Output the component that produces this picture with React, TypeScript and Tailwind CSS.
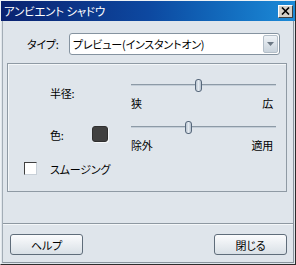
import React from "react";

const font = "font-['Noto_Sans_CJK_JP','Noto_Sans',sans-serif] [font-feature-settings:'palt'] tracking-[-0.2px]";

function Slider({ pos, low, high }: { pos: number; low: string; high: string }) {
  return (
    <div className="w-[145px]">
      <div className="relative h-[13px]">
        <div className="absolute left-0 right-0 top-[5px] h-[2px] border-t border-[#8d9aa6] bg-[#c4ced8]" />
        <div
          className="absolute top-0 h-[13px] w-[7px] rounded-[3px] border border-[#56677a] bg-gradient-to-r from-[#b9c4cf] via-[#e4eaf0] to-[#b4c0cc]"
          style={{ left: pos }}
        />
      </div>
      <div className="mt-[5px] flex justify-between pr-[3px] leading-[12px]">
        <span>{low}</span>
        <span>{high}</span>
      </div>
    </div>
  );
}

function Button({ label }: { label: string }) {
  return (
    <button className="flex h-[21px] w-[73px] items-center justify-center rounded-[3px] border border-[#5f6d7a] bg-gradient-to-b from-[#fbfcfd] to-[#d9e0e6] text-[11px] leading-[12px] text-black">
      {label}
    </button>
  );
}

export default function App() {
  return (
    <div className={`${font} h-[265px] w-[296px] border border-t-[#eef2f5] border-l-[#eef2f5] border-r-[#2c2c2c] border-b-[#2c2c2c] bg-[#dfe5eb] text-[11px] text-black`}>
      <div className="flex h-[20px] items-center justify-between bg-gradient-to-r from-[#0a2270] via-[#0d48a0] to-[#1c8bd8] pl-[3px] pr-[2px]">
        <span className="text-[11.5px] leading-[12px] text-white">アンビエント シャドウ</span>
        <div className="flex h-[13px] w-[15px] items-center justify-center border border-t-white border-l-white border-r-[#404040] border-b-[#404040] bg-[#d4d0c8]">
          <svg width="9" height="8" viewBox="0 0 9 8">
            <path d="M1 0.5 L8 7.5 M8 0.5 L1 7.5" stroke="#000" strokeWidth="1.6" />
          </svg>
        </div>
      </div>
      <div className="ml-px mr-px h-[242px] border-l border-r border-b border-l-[#a3adb6] border-r-[#8a949d] border-b-[#8a949d] pt-[12px]">
        <div className="flex items-center">
          <span className="w-[66px] pl-[24px] leading-[12px]">タイプ:</span>
          <div className="flex h-[22px] w-[211px] items-center justify-between rounded-[3px] border border-[#8593a0] bg-white pl-[3px] pr-px">
            <span className="leading-[12px]">プレビュー(インスタントオン)</span>
            <div className="flex h-[18px] w-[15px] items-center justify-center rounded-[2px] border border-[#b3bec8] bg-gradient-to-b from-[#eef2f6] to-[#c9d3dc]">
              <svg width="7" height="4" viewBox="0 0 7 4">
                <path d="M0 0 H7 L3.5 4 Z" fill="#6c7884" />
              </svg>
            </div>
          </div>
        </div>

        <div className="ml-[4px] mt-[8px] h-[129px] w-[280px] border border-[#8f9aa4] shadow-[inset_1px_1px_0_#f4f7f9]">
          <div className="mt-[15px] flex pl-[42px]">
            <div className="w-[81px] pt-[8px] leading-[12px]">半径:</div>
            <Slider pos={64} low="狭" high="広" />
          </div>

          <div className="mt-[12px] flex pl-[42px]">
            <div className="flex w-[81px] items-start">
              <span className="w-[42px] pt-[8px] leading-[12px]">色:</span>
              <div className="mt-[5px] h-[16px] w-[16px] rounded-[3px] border border-[#2f2f2f] bg-[#404040] shadow-[1px_1px_0_#f6f8fa]" />
            </div>
            <Slider pos={54} low="除外" high="適用" />
          </div>

          <div className="mt-[11px] flex items-center pl-[16px]">
            <div className="h-[13px] w-[13px] border border-t-[#404040] border-l-[#404040] border-r-[#c8d0d8] border-b-[#c8d0d8] bg-white" />
            <span className="ml-[13px] leading-[12px]">スムージング</span>
          </div>
        </div>

        <div className="mt-[31px] h-px w-full bg-[#8e98a1] shadow-[0_1px_0_#f4f7f9]" />

        <div className="mt-[10px] flex justify-between pl-[7px] pr-[6px]">
          <Button label="ヘルプ" />
          <Button label="閉じる" />
        </div>
      </div>
    </div>
  );
}
